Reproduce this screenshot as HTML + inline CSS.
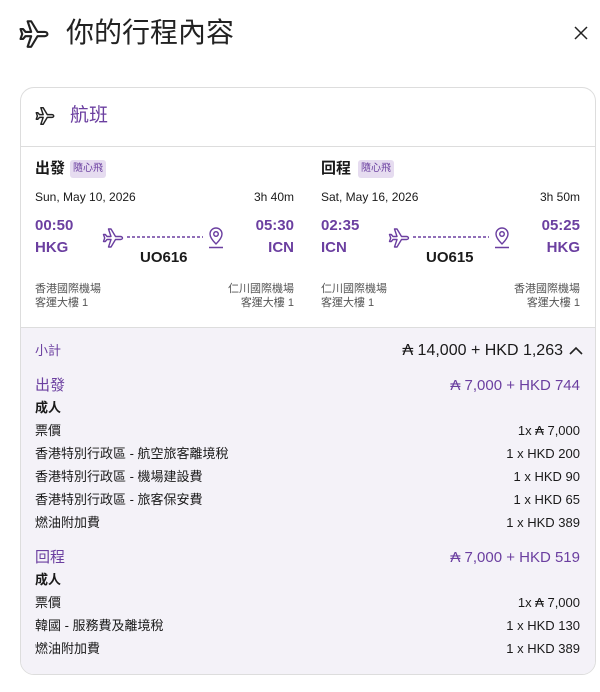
<!DOCTYPE html>
<html><head><meta charset="utf-8"><style>
*{margin:0;padding:0;box-sizing:border-box}
body{width:600px;height:692px;background:#fff;font-family:"Liberation Sans","Noto Sans CJK TC",sans-serif;color:#1a1a1a;position:relative;overflow:hidden}
.a{position:absolute;white-space:nowrap;line-height:1}
.p{color:#6b3fa0}
.b{font-weight:bold}
.r{text-align:right}
.tag{position:absolute;background:#e6dcf0;color:#6b3fa0;font-size:10px;border-radius:3px;padding:4px 3px;line-height:1}
.card{position:absolute;left:20px;top:87px;width:576px;height:588px;border:1px solid #ddd;border-radius:14px;overflow:hidden}
.pr{position:absolute;left:0;top:239px;width:100%;height:349px;background:#f4f2f8;border-top:1px solid #ddd}
.hd{position:absolute;left:0;top:58px;width:100%;border-top:1px solid #ddd}
</style></head><body>
<svg width="0" height="0" style="position:absolute"><defs><path id="pl" d="M21.5 12c0-.9-1-1.5-2-1.5H14.5L10 3H7.5l2.5 7.5H6L4.3 8.5H2.5l1.2 3.5-1.2 3.5h1.8L6 13.5h4l-2.5 7.5H10l4.5-7.5h5c1 0 2-.6 2-1.5z"/></defs></svg>
<svg class="a" style="left:17px;top:17px" width="34" height="34" viewBox="0 0 24 24" fill="none" stroke="#222" stroke-width="1.5" stroke-linejoin="round"><use href="#pl"/></svg>
<div class="a" style="left:66px;top:19px;font-size:28px;color:#222">你的行程內容</div>
<svg class="a" style="left:574px;top:26px" width="14" height="14" viewBox="0 0 14 14" stroke="#222" stroke-width="1.5"><path d="M1 1l12 12M13 1L1 13"/></svg>
<div class="card">
<svg class="a" style="left:13px;top:17px" width="22" height="22" viewBox="0 0 24 24" fill="none" stroke="#222" stroke-width="1.6" stroke-linejoin="round"><use href="#pl"/></svg>
<div class="a p" style="left:49px;top:18px;font-size:19px">航班</div>
<div class="hd"></div>
<div class="pr"></div>
</div>
<!-- col 1 -->
<div class="a b" style="left:35px;top:161px;font-size:15px">出發</div>
<div class="tag" style="left:70px;top:160px">隨心飛</div>
<div class="a" style="left:35px;top:191px;font-size:12px">Sun, May 10, 2026</div>
<div class="a r" style="right:306px;top:191px;font-size:12px">3h 40m</div>
<div class="a p b" style="left:35px;top:218px;font-size:15px">00:50</div>
<div class="a p b" style="left:35px;top:240px;font-size:15px">HKG</div>
<div class="a p b" style="right:306px;top:218px;font-size:15px">05:30</div>
<div class="a p b" style="right:306px;top:240px;font-size:15px">ICN</div>
<svg class="a" style="left:101px;top:226px" width="126" height="24" viewBox="0 0 126 24" fill="none" stroke="#6b3fa0" stroke-width="1.4" stroke-linejoin="round"><use href="#pl"/><path d="M26 11h76" stroke-dasharray="3 2"/><path d="M115 18c-4-4-6-7-6-10a6 6 0 0 1 12 0c0 3-2 6-6 10z M115 5.7a2.3 2.3 0 1 0 .01 0M108 21.5h14"/></svg>
<div class="a b" style="left:140px;top:250px;font-size:15px">UO616</div>
<div class="a" style="left:35px;top:284px;font-size:11px;color:#555">香港國際機場</div>
<div class="a" style="left:35px;top:298px;font-size:11px;color:#555">客運大樓 1</div>
<div class="a r" style="right:306px;top:284px;font-size:11px;color:#555">仁川國際機場</div>
<div class="a r" style="right:306px;top:298px;font-size:11px;color:#555">客運大樓 1</div>
<!-- col 2 -->
<div class="a b" style="left:321px;top:161px;font-size:15px">回程</div>
<div class="tag" style="left:358px;top:160px">隨心飛</div>
<div class="a" style="left:321px;top:191px;font-size:12px">Sat, May 16, 2026</div>
<div class="a r" style="right:20px;top:191px;font-size:12px">3h 50m</div>
<div class="a p b" style="left:321px;top:218px;font-size:15px">02:35</div>
<div class="a p b" style="left:321px;top:240px;font-size:15px">ICN</div>
<div class="a p b" style="right:20px;top:218px;font-size:15px">05:25</div>
<div class="a p b" style="right:20px;top:240px;font-size:15px">HKG</div>
<svg class="a" style="left:387px;top:226px" width="126" height="24" viewBox="0 0 126 24" fill="none" stroke="#6b3fa0" stroke-width="1.4" stroke-linejoin="round"><use href="#pl"/><path d="M26 11h76" stroke-dasharray="3 2"/><path d="M115 18c-4-4-6-7-6-10a6 6 0 0 1 12 0c0 3-2 6-6 10z M115 5.7a2.3 2.3 0 1 0 .01 0M108 21.5h14"/></svg>
<div class="a b" style="left:426px;top:250px;font-size:15px">UO615</div>
<div class="a" style="left:321px;top:284px;font-size:11px;color:#555">仁川國際機場</div>
<div class="a" style="left:321px;top:298px;font-size:11px;color:#555">客運大樓 1</div>
<div class="a r" style="right:20px;top:284px;font-size:11px;color:#555">香港國際機場</div>
<div class="a r" style="right:20px;top:298px;font-size:11px;color:#555">客運大樓 1</div>
<!-- price -->
<div class="a p" style="left:35px;top:344px;font-size:13px">小計</div>
<div class="a" style="right:37px;top:343px;font-size:16px">₳ 14,000 + HKD 1,263</div>
<svg class="a" style="left:568px;top:345px" width="16" height="12" viewBox="0 0 16 12" fill="none" stroke="#222" stroke-width="1.6"><path d="M2 9l6-6 6 6"/></svg>
<div class="a p" style="left:35px;top:378px;font-size:15px">出發</div>
<div class="a p" style="right:20px;top:378px;font-size:15px">₳ 7,000 + HKD 744</div>
<div class="a b" style="left:35px;top:401px;font-size:13px">成人</div>
<div class="a" style="left:35px;top:424px;font-size:13px">票價</div><div class="a" style="right:20px;top:424px;font-size:13px">1x ₳ 7,000</div>
<div class="a" style="left:35px;top:447px;font-size:13px">香港特別行政區 - 航空旅客離境稅</div><div class="a" style="right:20px;top:447px;font-size:13px">1 x HKD 200</div>
<div class="a" style="left:35px;top:470px;font-size:13px">香港特別行政區 - 機場建設費</div><div class="a" style="right:20px;top:470px;font-size:13px">1 x HKD 90</div>
<div class="a" style="left:35px;top:493px;font-size:13px">香港特別行政區 - 旅客保安費</div><div class="a" style="right:20px;top:493px;font-size:13px">1 x HKD 65</div>
<div class="a" style="left:35px;top:516px;font-size:13px">燃油附加費</div><div class="a" style="right:20px;top:516px;font-size:13px">1 x HKD 389</div>
<div class="a p" style="left:35px;top:550px;font-size:15px">回程</div>
<div class="a p" style="right:20px;top:550px;font-size:15px">₳ 7,000 + HKD 519</div>
<div class="a b" style="left:35px;top:573px;font-size:13px">成人</div>
<div class="a" style="left:35px;top:596px;font-size:13px">票價</div><div class="a" style="right:20px;top:596px;font-size:13px">1x ₳ 7,000</div>
<div class="a" style="left:35px;top:619px;font-size:13px">韓國 - 服務費及離境稅</div><div class="a" style="right:20px;top:619px;font-size:13px">1 x HKD 130</div>
<div class="a" style="left:35px;top:642px;font-size:13px">燃油附加費</div><div class="a" style="right:20px;top:642px;font-size:13px">1 x HKD 389</div>
</body></html>
